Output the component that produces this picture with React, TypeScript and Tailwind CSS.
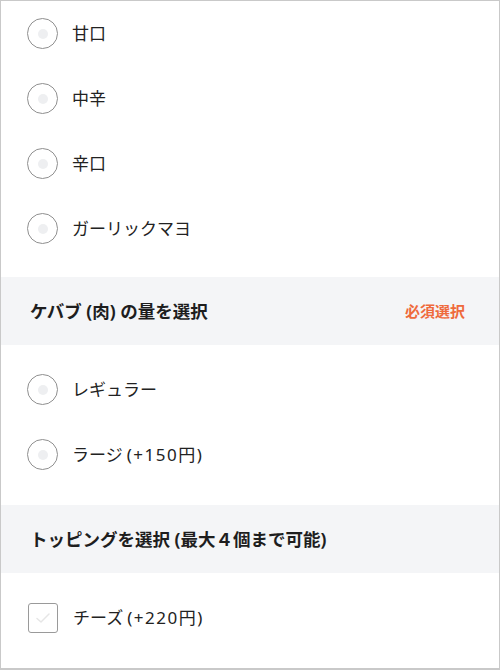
import React from "react";

const font = { fontFamily: '"Noto Sans", "Noto Sans CJK JP", sans-serif' };

const Radio = ({ label, price }: { label: string; price?: string }) => (
    <div className="h-[65px] flex items-center pl-[26px]">
        <span className="w-[31px] h-[31px] rounded-full border-[1.5px] border-[#8f8f8f] flex items-center justify-center shrink-0">
            <span className="w-[10px] h-[10px] rounded-full bg-[#eeeff1]" />
        </span>
        <span className="ml-[14px] text-[17px] text-[#222]">
            {label}
            {price && <span className="ml-[4px] tracking-[1.5px]">{price}</span>}
        </span>
    </div>
);

const Check = ({ label, price }: { label?: string; price?: string }) => (
    <div className="h-[65px] flex items-center pl-[27px]">
        <span className="w-[30px] h-[30px] rounded-[3px] border-[1.5px] border-[#9a9a9a] flex items-center justify-center shrink-0">
            <svg width="16" height="12" viewBox="0 0 16 12" fill="none">
                <path d="M2 6.5l4 3.5 8-8" stroke="#e6e6e6" strokeWidth="1.5" strokeLinecap="round" strokeLinejoin="round" />
            </svg>
        </span>
        {label && (
            <span className="ml-[15px] text-[17px] text-[#222]">
                {label}
                {price && <span className="ml-[4px] tracking-[1.5px]">{price}</span>}
            </span>
        )}
    </div>
);

const Header = ({ title, required }: { title: string; required?: boolean }) => (
    <div className="h-[68px] bg-[#f4f5f7] flex items-center justify-between pl-[29px] pr-[34px]">
        <span className="text-[17.5px] font-bold text-[#1e1e1e]">{title}</span>
        {required && <span className="text-[15px] font-bold text-[#ef6a3c]">必須選択</span>}
    </div>
);

export default function App() {
    return (
        <div className="w-[500px] h-[670px] overflow-hidden bg-white border-t border-x border-b-2 border-[#c9c9c9]" style={font}>
            <div className="pb-4">
                <Radio label="甘口" />
                <Radio label="中辛" />
                <Radio label="辛口" />
                <Radio label="ガーリックマヨ" />
            </div>
            <Header title="ケバブ (肉) の量を選択" required />
            <div className="pt-3 pb-[18px]">
                <Radio label="レギュラー" />
                <Radio label="ラージ" price="(+150円)" />
            </div>
            <Header title="トッピングを選択 (最大４個まで可能)" />
            <div className="pt-3">
                <Check label="チーズ" price="(+220円)" />
                <Check />
            </div>
        </div>
    );
}
